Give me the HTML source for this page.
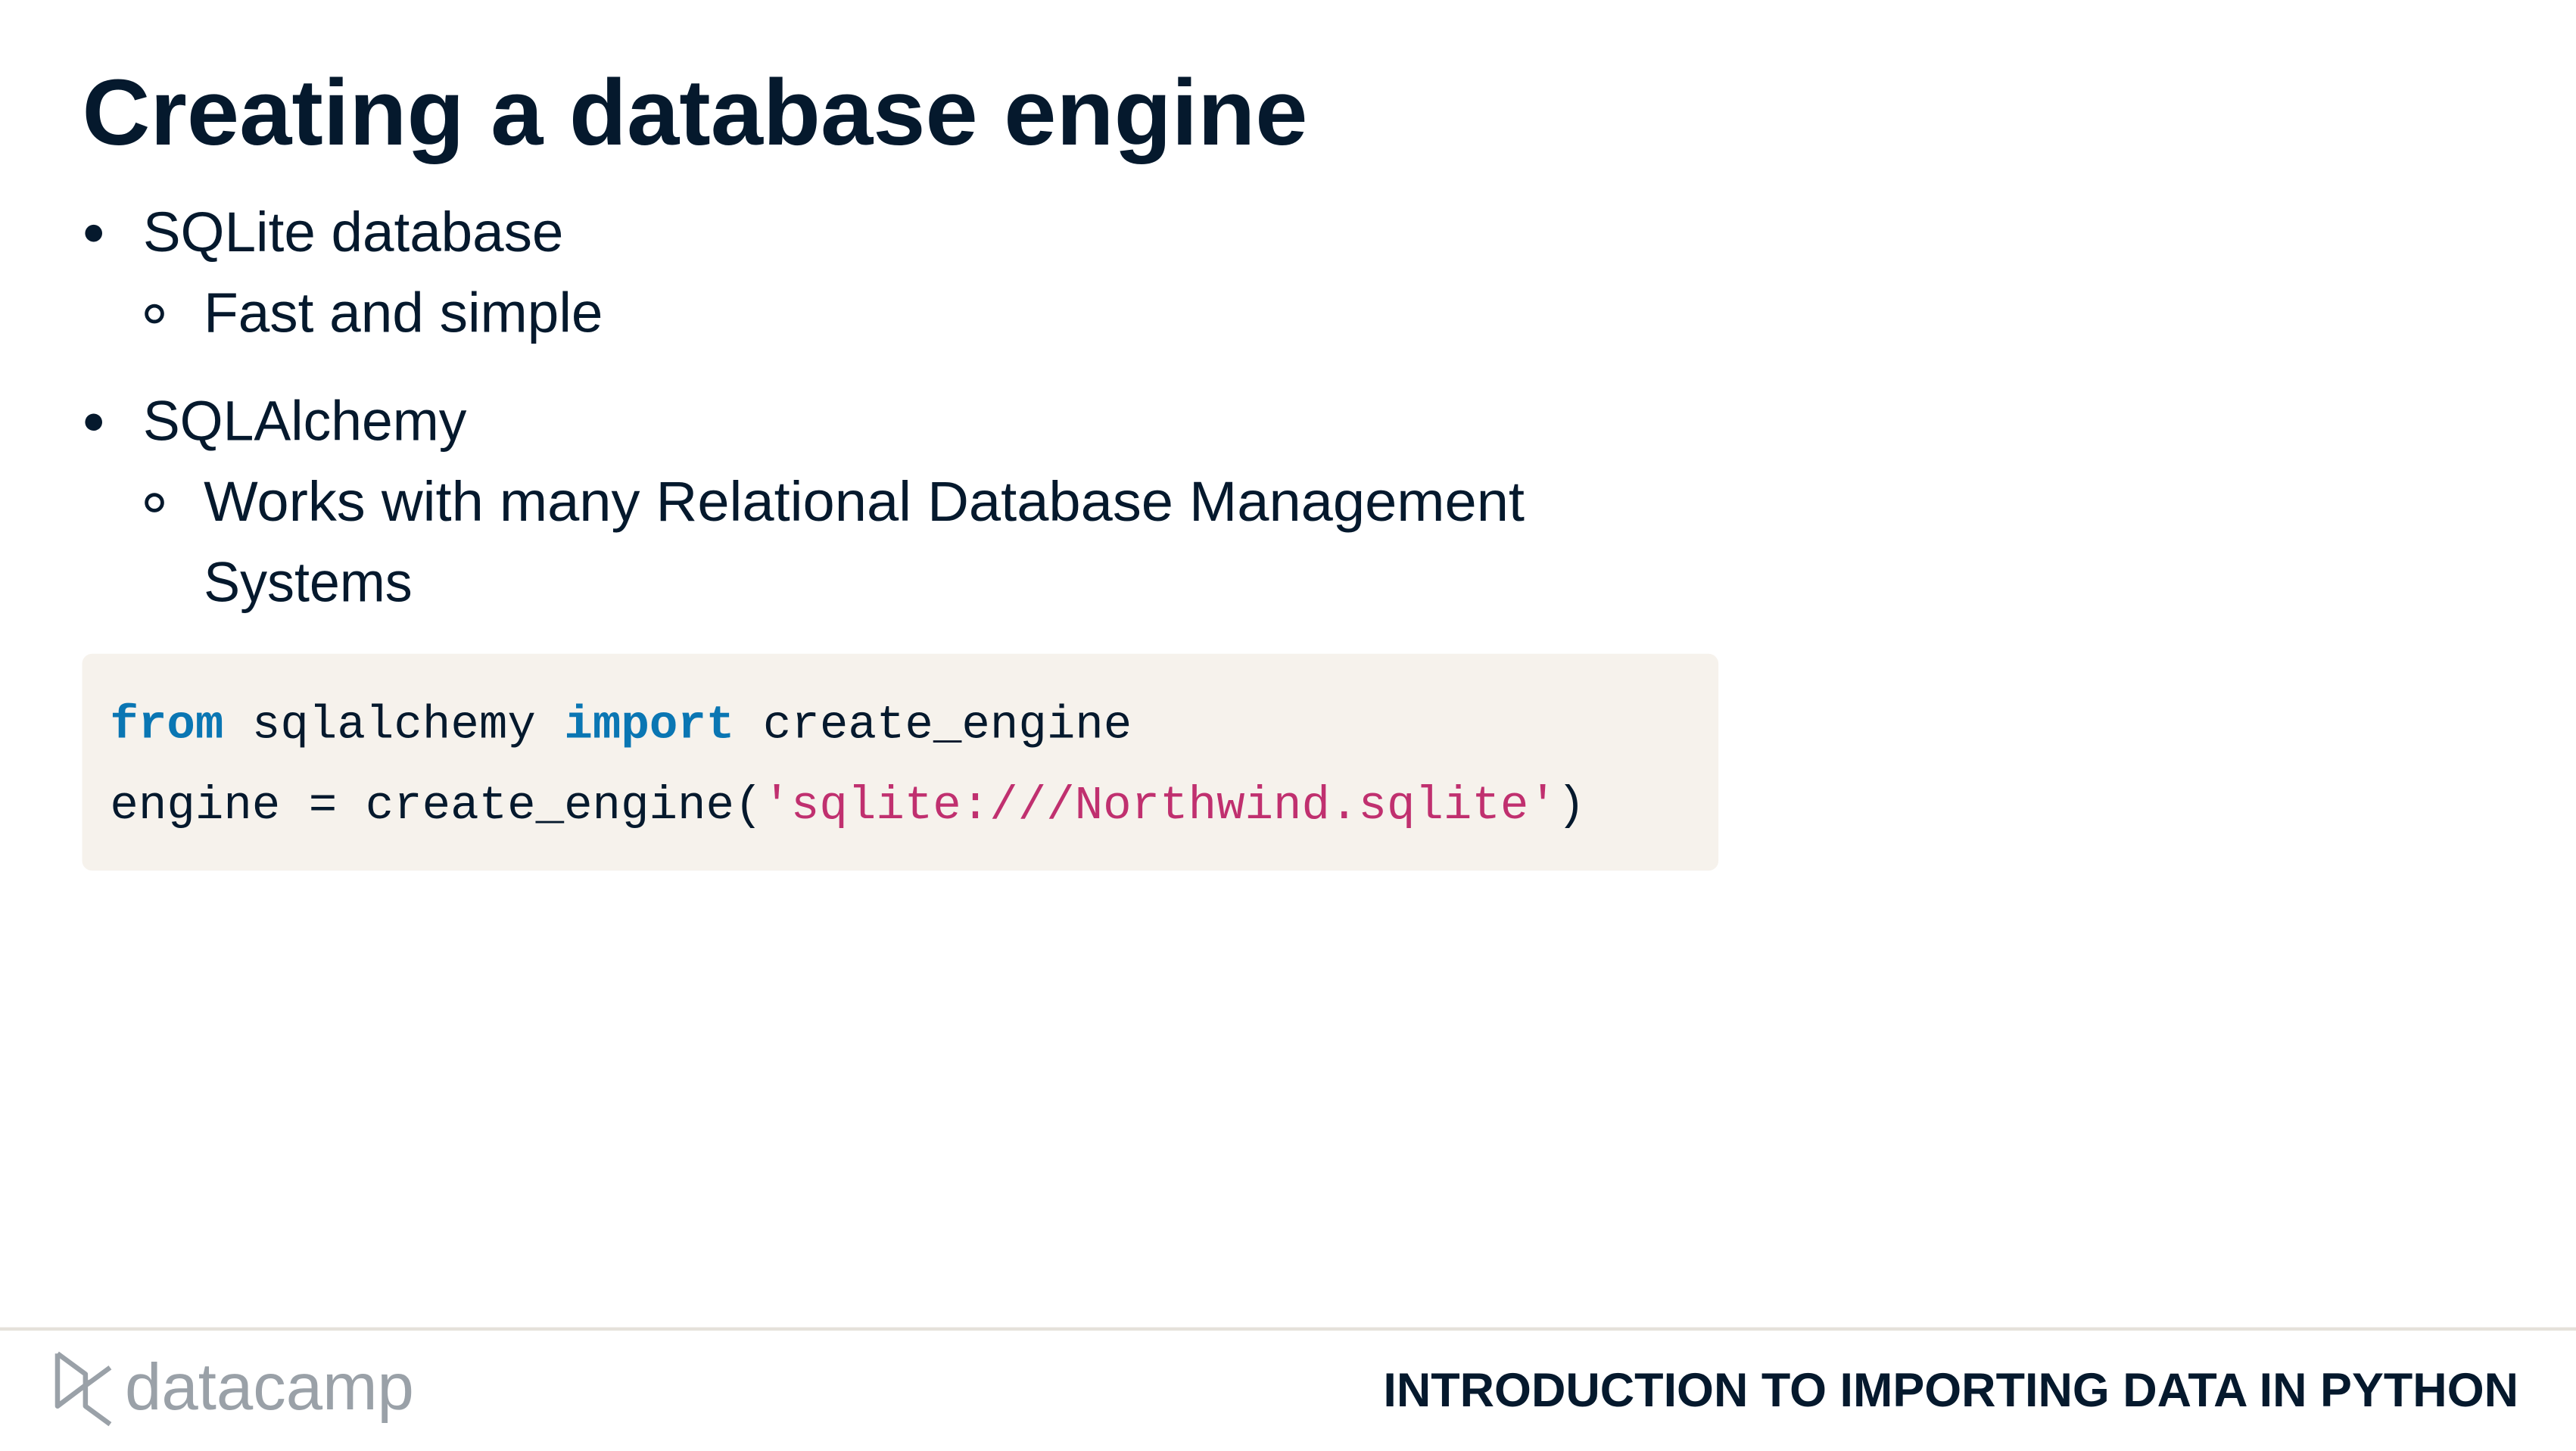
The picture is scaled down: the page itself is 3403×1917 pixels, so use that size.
<!DOCTYPE html>
<html><head><meta charset="utf-8"><style>
html,body{margin:0;padding:0;background:#fff;width:3403px;height:1917px;overflow:hidden}
svg{display:block}
</style></head><body>
<svg width="3403" height="1917" viewBox="0 0 1568 883.3" xmlns="http://www.w3.org/2000/svg">
<rect width="1568" height="883.3" fill="#fff"/>
<g fill="#05192d" font-family="'Liberation Sans', sans-serif">
<text x="50" y="88" font-size="57" font-weight="bold" textLength="746" lengthAdjust="spacingAndGlyphs">Creating a database engine</text>
<circle cx="57" cy="142" r="5.2"/>
<text x="87" y="153" font-size="34" textLength="256" lengthAdjust="spacingAndGlyphs">SQLite database</text>
<circle cx="94" cy="191" r="4.8" fill="none" stroke="#05192d" stroke-width="2.2"/>
<text x="124" y="202" font-size="34" textLength="243" lengthAdjust="spacingAndGlyphs">Fast and simple</text>
<circle cx="57" cy="257" r="5.2"/>
<text x="87" y="268" font-size="34" textLength="197" lengthAdjust="spacingAndGlyphs">SQLAlchemy</text>
<circle cx="94" cy="306" r="4.8" fill="none" stroke="#05192d" stroke-width="2.2"/>
<text x="124" y="317" font-size="34" textLength="804" lengthAdjust="spacingAndGlyphs">Works with many Relational Database Management</text>
<text x="124" y="366" font-size="34" textLength="127" lengthAdjust="spacingAndGlyphs">Systems</text>
</g>
<rect x="50" y="398" width="996" height="132" rx="6" fill="#f6f2ec"/>
<g font-family="'Liberation Mono', monospace" font-size="28.8" fill="#05192d">
<text x="67" y="449" textLength="622" lengthAdjust="spacingAndGlyphs"><tspan fill="#0a76b3" font-weight="bold">from</tspan> sqlalchemy <tspan fill="#0a76b3" font-weight="bold">import</tspan> create_engine</text>
<text x="67" y="498" textLength="898" lengthAdjust="spacingAndGlyphs">engine = create_engine(<tspan fill="#c0306f">'sqlite:///Northwind.sqlite'</tspan>)</text>
</g>
<rect x="0" y="808" width="1568" height="2" fill="#e5e1da"/>
<g fill="none" stroke="#9aa1a8" stroke-width="3" stroke-linejoin="round" stroke-linecap="butt">
<path d="M35 824 V856 L55 841 M35 824 L52 836.5 V856 L67 867 M52 843.5 L67 832.5"/>
</g>
<text x="76" y="858" font-family="'Liberation Sans', sans-serif" font-size="40" fill="#9aa1a8" textLength="176" lengthAdjust="spacingAndGlyphs">datacamp</text>
<text x="842" y="856" font-family="'Liberation Sans', sans-serif" font-size="29" font-weight="bold" fill="#05192d" textLength="691" lengthAdjust="spacingAndGlyphs">INTRODUCTION TO IMPORTING DATA IN PYTHON</text>
</svg>
</body></html>
